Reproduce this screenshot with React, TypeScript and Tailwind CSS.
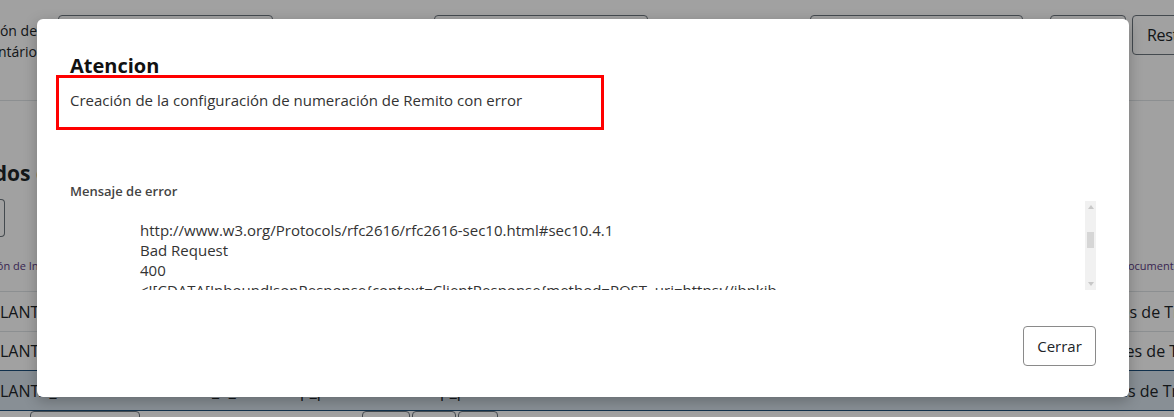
const font = { fontFamily: '"Open Sans", "Noto Sans", sans-serif' };

const errorLines = [
  "http://www.w3.org/Protocols/rfc2616/rfc2616-sec10.html#sec10.4.1",
  "Bad Request",
  "400",
  "<![CDATA[InboundJsonResponse{context=ClientResponse{method=POST, uri=https://ibpkib",
];

function Scrollbar() {
  return (
    <div className="flex w-[11px] shrink-0 flex-col items-center bg-[#f1f1f1]">
      <div className="mt-[4px] h-0 w-0 border-x-[3px] border-b-[4px] border-x-transparent border-b-[#c8c8c8]" />
      <div className="mt-[23px] h-[16px] w-[7px] bg-[#d6d6d6]" />
      <div className="flex-1" />
      <div className="mb-[4px] h-0 w-0 border-x-[3px] border-t-[4px] border-x-transparent border-t-[#c8c8c8]" />
    </div>
  );
}

function BackgroundPage() {
  return (
    <div className="text-[#212529]">
      <div className="flex h-[101px] items-start border-b border-[#dee2e6] pt-[15px]">
        <div className="flex w-[37px] shrink-0 justify-end overflow-hidden whitespace-nowrap pt-[5px] text-[14px] leading-[21px]">
          <div className="text-right">ción de<br />mentário</div>
        </div>
        <div className="ml-[21px] h-[40px] w-[215px] shrink-0 rounded-[4px] border border-[#6c757d]" />
        <div className="ml-[161px] h-[40px] w-[214px] shrink-0 rounded-[4px] border border-[#6c757d]" />
        <div className="ml-[162px] h-[40px] w-[213px] shrink-0 rounded-[4px] border border-[#6c757d]" />
        <div className="ml-[27px] h-[40px] w-[76px] shrink-0 rounded-[4px] border border-[#6c757d]" />
        <div className="ml-[6px] flex h-[40px] w-[100px] shrink-0 items-center whitespace-nowrap rounded-[4px] border border-[#6c757d] pl-[14px] text-[16px] tracking-[-0.3px]">Restablecer</div>
      </div>
      <div className="h-[58px]" />
      <div className="-ml-[85px] whitespace-nowrap text-[21px] font-bold leading-[28px]">Resultados de búsqueda</div>
      <div className="mt-[12px] h-[38px] w-[5px] rounded-r-[4px] border border-l-0 border-[#6c757d]" />
      <div className="mt-[21px] grid grid-cols-[1128px_1fr] whitespace-nowrap text-[11px] leading-[16px] text-[#5b3b82]">
        <span className="-ml-[6px]">ión de Inventario</span>
        <span className="-ml-[8px]">Documento</span>
      </div>
      <div className="mt-[17px] grid h-[40px] grid-cols-[1073px_1fr] items-center whitespace-nowrap border-t border-[#dee2e6] text-[16px]">
        <span>LANTA_MP1</span>
        <span>Ordenes de Trans</span>
      </div>
      <div className="grid h-[39px] grid-cols-[1078px_1fr] items-center whitespace-nowrap border-t border-[#dee2e6] text-[16px]">
        <span>LANTA_MP1</span>
        <span>Ordenes de Trans</span>
      </div>
      <div className="flex h-[41px] items-center whitespace-nowrap border-y border-[#1c4f7a] bg-[#d8e2ec] text-[16px]">
        <span className="w-[150px] shrink-0">LANTA_MP2</span>
        <span className="w-[150px] shrink-0">INVOICE_R_0001</span>
        <span className="w-[140px] shrink-0">p_producto</span>
        <span className="w-[150px] shrink-0">p_producto</span>
        <span className="w-[93px] shrink-0">1</span>
        <span className="w-[147px] shrink-0">Transfer Order</span>
        <span className="w-[143px] shrink-0">0001</span>
        <span className="shrink-0">Remito MP a Ordenes de Trans</span>
      </div>
      <div className="flex gap-[2px] pl-[30px]">
        <div className="h-[10px] w-[110px] shrink-0 rounded-t-[4px] border border-[#6c757d]" />
        <div className="ml-[220px] h-[10px] w-[48px] shrink-0 rounded-t-[4px] border border-[#6c757d]" />
        <div className="h-[10px] w-[44px] shrink-0 rounded-t-[4px] border border-[#6c757d]" />
        <div className="h-[10px] w-[40px] shrink-0 rounded-t-[4px] border border-[#6c757d]" />
      </div>
    </div>
  );
}

export default function App() {
  return (
    <div className="relative h-[417px] w-full overflow-hidden bg-white" style={font}>
      <BackgroundPage />
      <div className="absolute inset-0 bg-black/[0.37]" />
      <div className="absolute left-[37px] top-[19px] flex h-[378px] w-[1092px] flex-col rounded-[6px] bg-white px-[33px] pt-[34px] text-[#212529] shadow-[0_4px_14px_rgba(0,0,0,0.25)]">
        <h2 className="-mb-[4px] text-[20px] font-bold leading-[26px] text-[#111]">Atencion</h2>
        <div className="-ml-[14px] flex h-[55px] w-[548px] items-center border-[3px] border-[#ff0000] pb-[4px] pl-[11px] text-[15px] text-[#333]">
          Creación de la configuración de numeración de Remito con error
        </div>
        <div className="mt-[52px] text-[13px] font-semibold leading-[18px] text-[#444]">Mensaje de error</div>
        <div className="mt-[1px] flex h-[89px] w-[1026px]">
          <div className="flex-1 overflow-hidden whitespace-nowrap pl-[70px] pt-[19px] text-[15px] leading-[20px] text-[#333]">
            {errorLines.map((line) => (
              <div key={line}>{line}</div>
            ))}
          </div>
          <Scrollbar />
        </div>
        <div className="mt-[36px] flex justify-end">
          <button className="h-[40px] w-[73px] rounded-[4px] border border-[#8a8a8a] text-[15px] text-[#212529]">Cerrar</button>
        </div>
      </div>
    </div>
  );
}
